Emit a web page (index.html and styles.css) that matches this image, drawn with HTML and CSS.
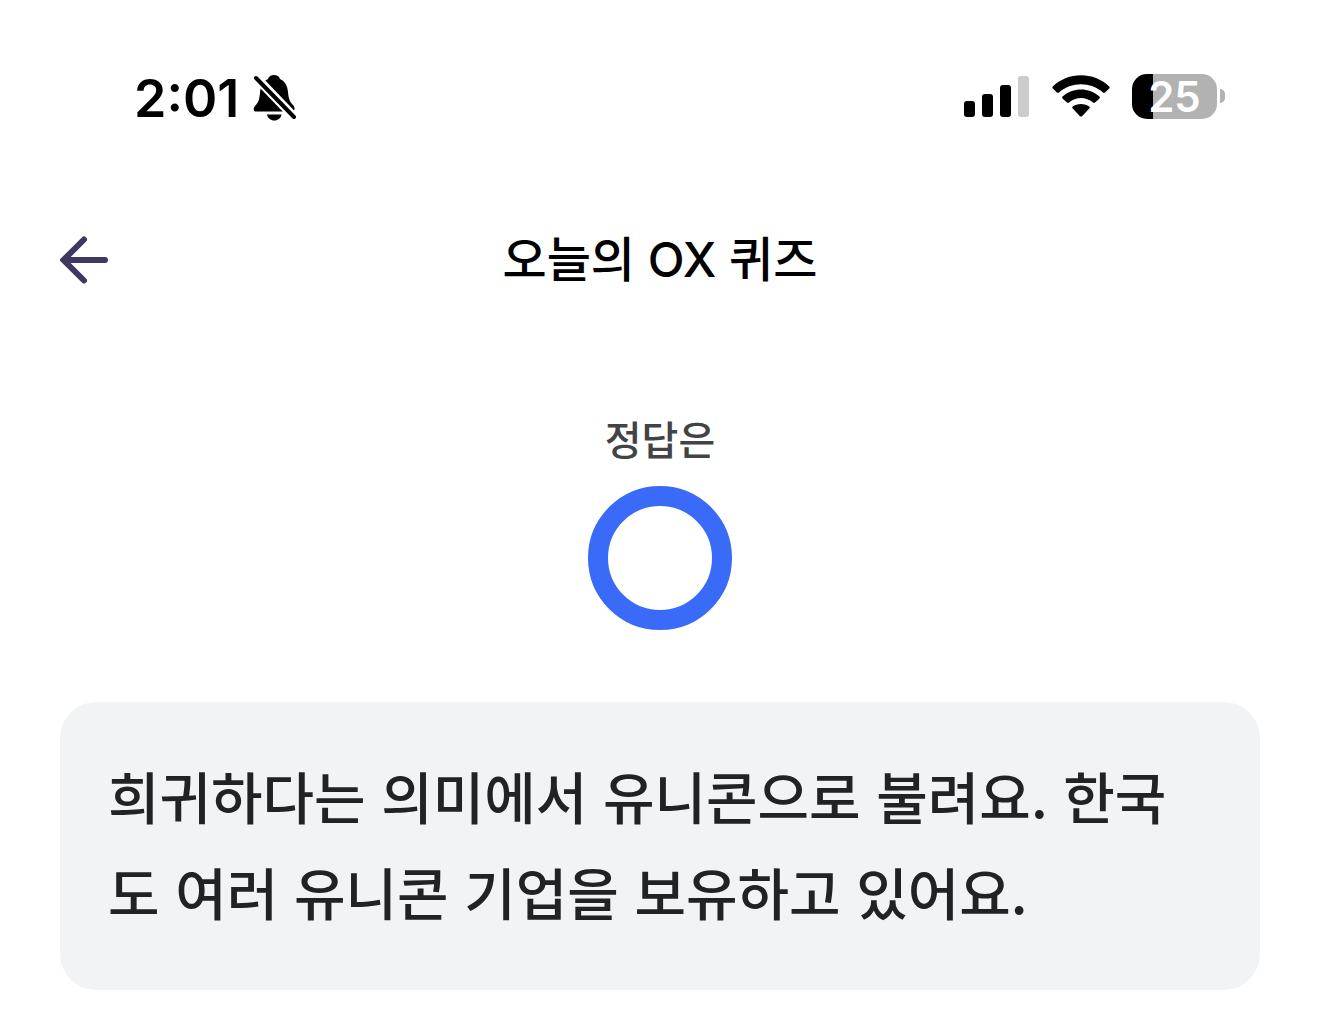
FILE: index.html
```html
<!DOCTYPE html>
<html lang="ko">
<head>
<meta charset="utf-8">
<meta name="viewport" content="width=device-width, initial-scale=1">
<title>오늘의 OX 퀴즈</title>
<link rel="stylesheet" href="styles.css">
</head>
<body>
<div class="status-bar">
  <div class="status-left">
    <time class="clock">2:01</time>
    <svg class="bell" viewBox="1 1 44 48" width="44" height="48" role="img" aria-label="무음">
      <path d="M3 37.500C1 36 1.500 34 3 32C7 28 7.500 24 8 19C8.500 12 11 7 16 5C17 2 19 1 22 1S27 2 28 5C33 7 35.500 12 36 18C36.500 25 38 28 41 31C43 33 43 36 41.500 37.500Z"/>
      <path d="M15 40.500H29.500C29 44 26 46.500 22.300 46.500S15.500 44 15 40.500Z"/>
      <path class="bell-gap" d="M-2 -3L48 49"/>
      <path class="bell-slash" d="M4 4L42 43"/>
    </svg>
  </div>
  <div class="status-right">
    <svg viewBox="0 0 66 42" width="66" height="42" role="img" aria-label="신호 세기">
      <rect x="0" y="26" width="11" height="16" rx="3"/>
      <rect x="18" y="19" width="11" height="23" rx="3"/>
      <rect x="36" y="10" width="11" height="32" rx="3"/>
      <rect class="signal-off" x="54" y="1" width="11" height="41" rx="3"/>
    </svg>
    <svg viewBox="0 0 58 43" width="58" height="43" role="img" aria-label="와이파이">
      <path d="M.8 11.500C16-3.500 42-3.500 57.200 11.500Q58 12.500 57.200 13.500L53 17.500Q52 18.300 51 17.500C39 6.500 19 6.500 7 17.500Q6 18.300 5 17.500L.8 13.500Q0 12.500 .8 11.500Z"/>
      <path d="M10.500 21.500C21 12 37 12 47.500 21.500Q48.300 22.500 47.500 23.500L43 27.500Q42 28.300 41 27.500C34 21.500 24 21.500 17 27.500Q16 28.300 15 27.500L10.500 23.500Q9.700 22.500 10.500 21.500Z"/>
      <path d="M20.700 31.500C25 28 33 28 37.300 31.500Q38.300 32.500 37.300 33.500L30 41.200Q29 42 28 41.200L20.700 33.500Q19.700 32.500 20.700 31.500Z"/>
    </svg>
    <div class="battery">
      <div class="battery-body">25</div>
      <div class="battery-tip"></div>
    </div>
  </div>
</div>
<header class="top-bar">
  <button class="back" type="button" aria-label="뒤로">
    <svg viewBox="0 0 48 48" width="48" height="48" aria-hidden="true">
      <path d="M24 3.500L3.500 24L24 44.500M4 24H45"/>
    </svg>
  </button>
  <h1 class="title">오늘의 OX 퀴즈</h1>
</header>
<main class="content">
  <section class="answer">
    <h2 class="answer-label">정답은</h2>
    <svg class="answer-mark" viewBox="0 0 144 144" width="144" height="144" role="img" aria-label="O">
      <circle cx="72" cy="72" r="62"/>
    </svg>
  </section>
  <p class="explanation">희귀하다는 의미에서 유니콘으로 불려요. 한국도 여러 유니콘 기업을 보유하고 있어요.</p>
</main>
</body>
</html>
```
FILE: styles.css
```css
* {
  box-sizing: border-box;
}

body {
  margin: 0;
  background: #fff;
  color: #000;
  font-family: Inter, "Noto Sans CJK KR", sans-serif;
}

svg {
  display: block;
}

.status-bar {
  display: flex;
  justify-content: space-between;
  align-items: center;
  padding: 67px 95px 0 134px;
}

.status-left,
.status-right {
  display: flex;
  align-items: center;
}

.status-left {
  gap: 14px;
}

.status-right {
  gap: 22px;
  padding-bottom: 6px;
}

.clock {
  font-size: 52px;
  font-weight: 600;
  line-height: 64px;
}

.bell-gap {
  fill: none;
  stroke: #fff;
  stroke-width: 9;
}

.bell-slash {
  fill: none;
  stroke: #000;
  stroke-width: 4;
  stroke-linecap: round;
}

.signal-off {
  fill: #ccc;
}

.battery {
  display: flex;
  align-items: center;
  gap: 3px;
}

.battery-body {
  width: 85px;
  border-radius: 15px;
  background: linear-gradient(to right, #000 25%, #b2b2b2 25%);
  color: #fff;
  font-size: 42px;
  font-weight: 600;
  line-height: 45px;
  text-align: center;
}

.battery-tip {
  width: 5px;
  height: 14px;
  border-radius: 0 7px 7px 0;
  background: #b2b2b2;
}

.top-bar {
  display: grid;
  grid-template-columns: 48px 1fr 48px;
  align-items: center;
  padding: 93px 60px 0;
}

.back {
  padding: 0;
  border: 0;
  background: none;
  cursor: pointer;
}

.back path {
  fill: none;
  stroke: #403762;
  stroke-width: 6;
  stroke-linecap: round;
}

.title {
  margin: 0;
  font-size: 48px;
  font-weight: 500;
  line-height: 72px;
  text-align: center;
}

.content {
  padding: 115px 60px 43px;
}

.answer {
  display: flex;
  flex-direction: column;
  align-items: center;
  gap: 15px;
}

.answer-label {
  margin: 0;
  color: #434345;
  font-size: 40px;
  font-weight: 500;
  line-height: 60px;
}

.answer-mark circle {
  fill: none;
  stroke: #3a6bf8;
  stroke-width: 20;
}

.explanation {
  margin: 72px 0 0;
  padding: 45px 48px 51px;
  border-radius: 36px;
  background: #f2f3f5;
  color: #212224;
  font-family: "Noto Sans CJK KR", sans-serif;
  font-size: 56px;
  font-weight: 500;
  line-height: 96px;
  word-break: break-all;
}
```
